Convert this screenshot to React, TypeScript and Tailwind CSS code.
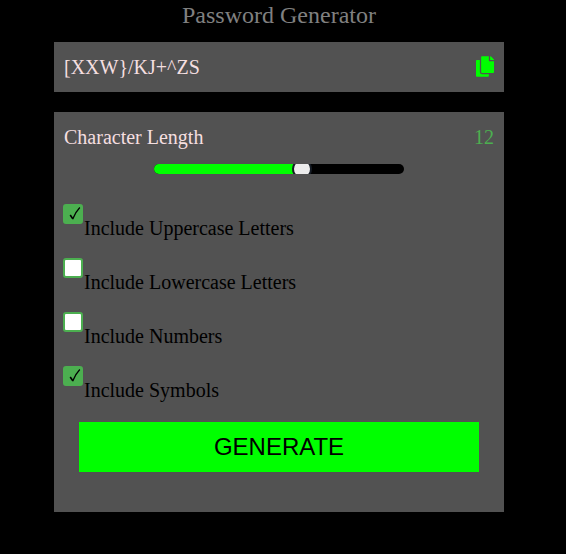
import { useState } from "react";
import { FaCopy } from "react-icons/fa";

const LABELS = [
  { label: "Include Uppercase Letters", on: true },
  { label: "Include Lowercase Letters", on: false },
  { label: "Include Numbers", on: false },
  { label: "Include Symbols", on: true },
];

function Option({ label, initial }: { label: string; initial: boolean }) {
  const [checked, setChecked] = useState(initial);
  return (
    <label className="flex h-[54px] items-start">
      <input type="checkbox" className="sr-only" checked={checked} onChange={() => setChecked(!checked)} />
      <span
        className={`flex size-5 shrink-0 rounded-[3px] border-2 border-[#4caf50] ${checked ? "bg-[#4caf50]" : "bg-white"}`}
      >
        {checked && (
          <svg viewBox="0 0 16 16" className="size-4" fill="none" stroke="black">
            <path d="M5.2 9 L7.8 12.8" strokeWidth="1.6" />
            <path d="M7.6 13.2 C9.4 8.8 11.6 4.8 14.8 1.5" strokeWidth="1.3" />
          </svg>
        )}
      </span>
      <span className="ml-px mt-3 leading-6">{label}</span>
    </label>
  );
}

export default function App() {
  return (
    <main className="h-[554px] w-[566px] overflow-hidden bg-black font-['Liberation_Serif',serif] text-[20px] text-black">
      <div className="ml-[54px] w-[450px]">
        <h1 className="h-[42px] pt-px text-center text-[24px] leading-[28px] text-[#808080]">Password Generator</h1>
        <section className="flex h-[50px] items-center justify-between bg-[#525252] px-[10px] text-[#f5dfe0]">
          <span>[XXW{"}"}/KJ+^ZS</span>
          <button aria-label="Copy" className="pb-px">
            <FaCopy className="h-[21px] w-[18px] text-[#00ff00]" />
          </button>
        </section>
        <section className="mt-5 h-[400px] bg-[#525252] pt-[13px]">
          <div className="flex h-6 items-center justify-between px-[10px] text-[#f5dfe0]">
            <span>Character Length</span>
            <span className="text-[#4caf50]">12</span>
          </div>
          <div className="mx-auto mt-[15px] flex h-[10px] w-[250px] overflow-hidden rounded-full bg-black">
            <div className="h-full w-[148px] shrink-0 bg-[#00ff00]" />
            <div className="-ml-[10px] -mt-[5px] size-5 shrink-0 rounded-full border-2 border-[#151b24] bg-[#ececec]" />
          </div>
          <div className="ml-[9px] mt-[30px]">
            {LABELS.map((o) => (
              <Option key={o.label} label={o.label} initial={o.on} />
            ))}
          </div>
          <button className="mx-auto mt-[2px] block h-[50px] w-[400px] bg-[#00ff00] font-['Liberation_Sans',sans-serif] text-[24px]">
            GENERATE
          </button>
        </section>
      </div>
    </main>
  );
}
